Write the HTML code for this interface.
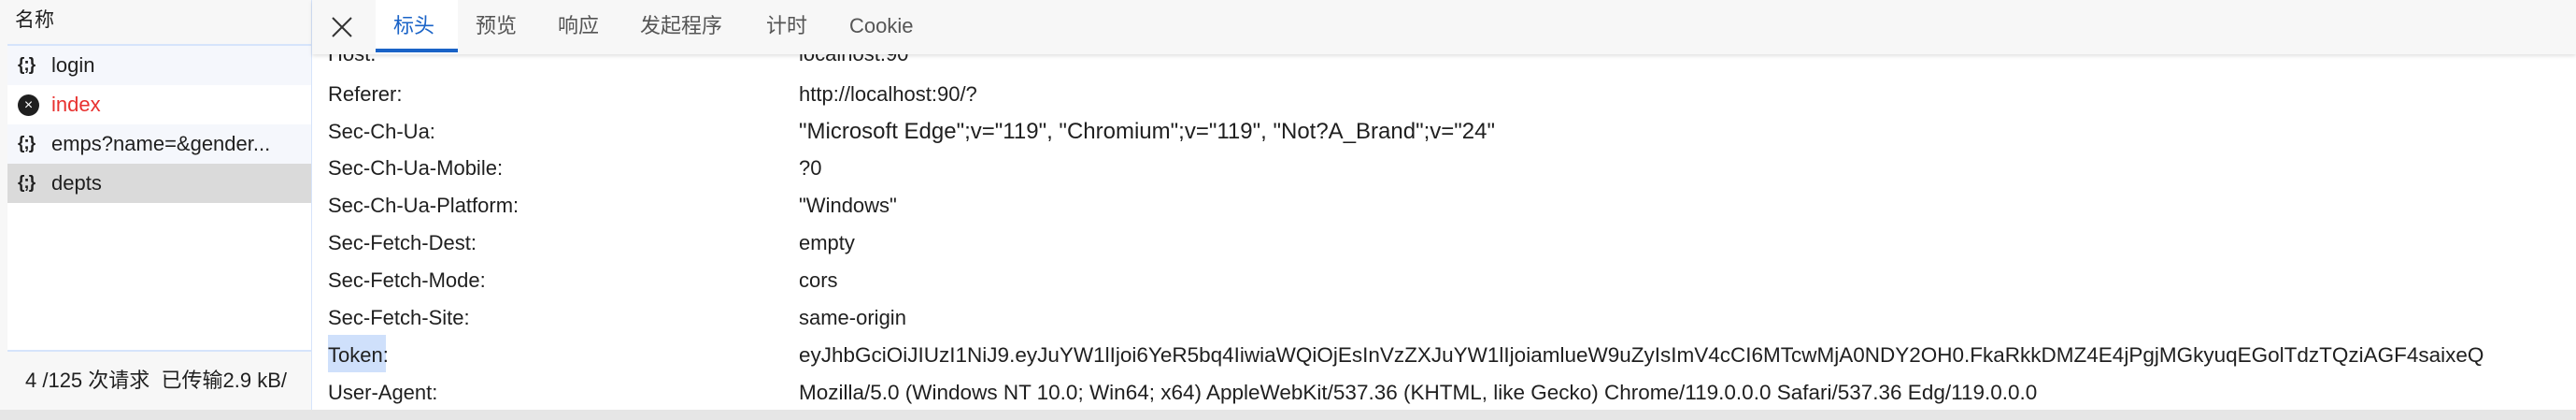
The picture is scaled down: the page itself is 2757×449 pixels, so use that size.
<!DOCTYPE html>
<html><head><meta charset="utf-8"><style>
*{margin:0;padding:0;box-sizing:border-box}
body{width:2757px;height:449px;overflow:hidden;background:#fff;font-family:"Liberation Sans","Noto Sans CJK SC",sans-serif;color:#1f1f1f;position:relative}
.left{position:absolute;left:0;top:0;width:333px;height:438px;background:#f7f7f7}
.hdr{position:absolute;left:8px;top:0;width:325px;height:47px;font-size:21px;line-height:44px;padding-left:8px}
.list{position:absolute;left:8px;top:47px;width:325px;height:327px;background:#fff;border-top:2px solid #d6e4fb}
.row{height:42px;font-size:22px;line-height:42px;padding-left:47px;position:relative;white-space:nowrap}
.ico{position:absolute;left:11px;top:0;font-size:19px;font-weight:bold;letter-spacing:-1px}
.err{position:absolute;left:11px;top:10px;width:23px;height:23px;border-radius:50%;background:#1f1f1f;color:#fff;font-size:16px;line-height:23px;text-align:center}
.foot{position:absolute;left:8px;top:374px;width:325px;height:64px;border-top:2px solid #d6e4fb;font-size:22px;line-height:62px;padding-left:19px;white-space:nowrap;overflow:hidden}
.vline{position:absolute;left:333px;top:0;width:1px;height:438px;background:#d6e4fb}
.tabs{position:absolute;left:334px;top:0;right:0;height:58px;background:#f7f7f7;box-shadow:0 2px 4px rgba(0,0,0,.12);z-index:2}
.tab{position:absolute;top:0;height:58px;line-height:56px;font-size:22px;color:#555}
.main{position:absolute;left:334px;top:0;right:0;height:438px;overflow:hidden}
.r{position:absolute;font-size:22px;white-space:nowrap;line-height:24px}
.k{left:17px}.v{left:521px}
.bot{position:absolute;left:0;top:438px;width:2757px;height:11px;background:#e6e6e6}
</style></head><body>
<div class="left">
<div class="hdr">名称</div>
<div class="list">
<div class="row" style="background:#f5f7fc"><span class="ico">{;}</span>login</div>
<div class="row" style="color:#e8312f"><span class="err">×</span>index</div>
<div class="row" style="background:#f5f7fc"><span class="ico">{;}</span>emps?name=&amp;gender...</div>
<div class="row" style="background:#dadada"><span class="ico">{;}</span>depts</div>
</div>
<div class="foot">4 /125 次请求&nbsp;&nbsp;已传输2.9 kB/</div>
</div>
<div class="vline"></div>
<div class="main">
<div class="r k" style="top:46px">Host:</div><div class="r v" style="top:46px">localhost:90</div>
<div class="r k" style="top:89px">Referer:</div><div class="r v" style="top:89px">http://localhost:90/?</div>
<div class="r k" style="top:129px">Sec-Ch-Ua:</div><div class="r v" style="top:129px;font-size:24px">"Microsoft Edge";v="119", "Chromium";v="119", "Not?A_Brand";v="24"</div>
<div class="r k" style="top:168px">Sec-Ch-Ua-Mobile:</div><div class="r v" style="top:168px">?0</div>
<div class="r k" style="top:208px">Sec-Ch-Ua-Platform:</div><div class="r v" style="top:208px">"Windows"</div>
<div class="r k" style="top:248px">Sec-Fetch-Dest:</div><div class="r v" style="top:248px">empty</div>
<div class="r k" style="top:288px">Sec-Fetch-Mode:</div><div class="r v" style="top:288px">cors</div>
<div class="r k" style="top:328px">Sec-Fetch-Site:</div><div class="r v" style="top:328px">same-origin</div>
<div style="position:absolute;left:17px;top:358px;width:62px;height:40px;background:#cfe0fb"></div>
<div class="r k" style="top:368px">Token:</div><div class="r v" style="top:368px;font-size:22.5px">eyJhbGciOiJIUzI1NiJ9.eyJuYW1lIjoi6YeR5bq4IiwiaWQiOjEsInVzZXJuYW1lIjoiamlueW9uZyIsImV4cCI6MTcwMjA0NDY2OH0.FkaRkkDMZ4E4jPgjMGkyuqEGolTdzTQziAGF4saixeQ</div>
<div class="r k" style="top:408px">User-Agent:</div><div class="r v" style="top:408px;font-size:22.5px">Mozilla/5.0 (Windows NT 10.0; Win64; x64) AppleWebKit/537.36 (KHTML, like Gecko) Chrome/119.0.0.0 Safari/537.36 Edg/119.0.0.0</div>
</div>
<div class="tabs">
<svg style="position:absolute;left:20px;top:17px" width="24" height="24" viewBox="0 0 24 24"><path d="M2 2L22 22M22 2L2 22" stroke="#333" stroke-width="2"/></svg>
<div style="position:absolute;left:68px;top:0;width:88px;height:58px;background:#fff"></div>
<div class="tab" style="left:87px;color:#1a63c7">标头</div>
<div style="position:absolute;left:68px;top:52px;width:88px;height:4px;background:#1a63c7"></div>
<div class="tab" style="left:175px">预览</div>
<div class="tab" style="left:263px">响应</div>
<div class="tab" style="left:351px">发起程序</div>
<div class="tab" style="left:486px">计时</div>
<div class="tab" style="left:575px">Cookie</div>
</div>
<div class="bot"></div>
</body></html>
